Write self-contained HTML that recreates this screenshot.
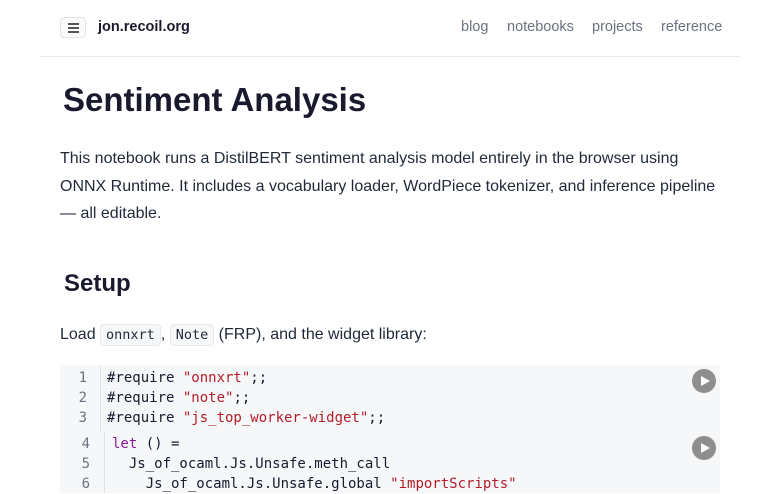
<!DOCTYPE html>
<html><head><meta charset="utf-8"><style>
*{margin:0;padding:0;box-sizing:border-box}
body{width:780px;height:493px;overflow:hidden;background:#fff;font-family:"Liberation Sans",sans-serif;color:#1a1a2e;position:relative}
.a{position:absolute;white-space:nowrap}
.nav{color:#6b7280;font-size:14.5px;top:19px}
.mono{font-family:"DejaVu Sans Mono","Liberation Mono",monospace;font-size:14px}
.ln{color:#6b7280;text-align:right;width:20px}
.s{color:#b31d28}.k{color:#8b1c9c}
.play{position:absolute;width:24px;height:24px;border-radius:50%;background:#8e8e8e}
.play:after{content:"";position:absolute;left:9px;top:6.5px;border-left:9px solid #fff;border-top:5.5px solid transparent;border-bottom:5.5px solid transparent}
code.i{font-family:"DejaVu Sans Mono",monospace;font-size:13.5px;background:#f6f7f9;border:1px solid #e6e8eb;border-radius:4px;padding:2px 5px}
</style></head><body>
<div class="a" style="left:60px;top:17px;width:26px;height:21px;border:1px solid #e2e4e8;border-radius:4px;background:#fafafa">
<div style="position:absolute;left:7px;top:5px;width:11px;height:1.5px;background:#555"></div>
<div style="position:absolute;left:7px;top:9px;width:11px;height:1.5px;background:#555"></div>
<div style="position:absolute;left:7px;top:13px;width:11px;height:1.5px;background:#555"></div>
</div>
<div class="a" style="left:98px;top:19px;font-size:14.5px;font-weight:bold;color:#1a1a2e">jon.recoil.org</div>
<div class="a nav" style="left:461px">blog</div>
<div class="a nav" style="left:507px">notebooks</div>
<div class="a nav" style="left:592px">projects</div>
<div class="a nav" style="left:661px">reference</div>
<div class="a" style="left:40px;top:56px;width:700px;height:1px;background:#e5e7eb"></div>
<div class="a" style="left:63px;top:81px;font-size:33px;font-weight:bold">Sentiment Analysis</div>
<div class="a" style="left:60px;top:145px;font-size:16px;line-height:27.5px;color:#1f2937;white-space:normal;width:662px">This notebook runs a DistilBERT sentiment analysis model entirely in the browser using ONNX Runtime. It includes a vocabulary loader, WordPiece tokenizer, and inference pipeline — all editable.</div>
<div class="a" style="left:64px;top:270px;font-size:24px;font-weight:bold">Setup</div>
<div class="a" style="left:60px;top:326px;font-size:16px;color:#1f2937">Load <code class="i">onnxrt</code>, <code class="i">Note</code> (FRP), and the widget library:</div>
<div class="a" style="left:60px;top:365px;width:660px;height:128px;background:#f6f7f9"></div>
<div class="a" style="left:100px;top:365px;width:1px;height:67px;background:#dcdfe3"></div>
<div class="a" style="left:104px;top:432px;width:1px;height:61px;background:#dcdfe3"></div>
<div class="a mono" style="left:67px;top:368px;line-height:20px"><div class="ln">1</div><div class="ln">2</div><div class="ln">3</div></div>
<div class="a mono" style="left:107px;top:368px;line-height:20px"><div>#require <span class="s">"onnxrt"</span>;;</div><div>#require <span class="s">"note"</span>;;</div><div>#require <span class="s">"js_top_worker-widget"</span>;;</div></div>
<div class="a mono" style="left:70px;top:434px;line-height:20px"><div class="ln">4</div><div class="ln">5</div><div class="ln">6</div></div>
<div class="a mono" style="left:112px;top:434px;line-height:20px;white-space:pre"><div><span class="k">let</span> () =</div><div>  Js_of_ocaml.Js.Unsafe.meth_call</div><div>    Js_of_ocaml.Js.Unsafe.global <span class="s">"importScripts"</span></div></div>
<div class="play" style="left:692px;top:369px"></div>
<div class="play" style="left:692px;top:436px"></div>
</body></html>
